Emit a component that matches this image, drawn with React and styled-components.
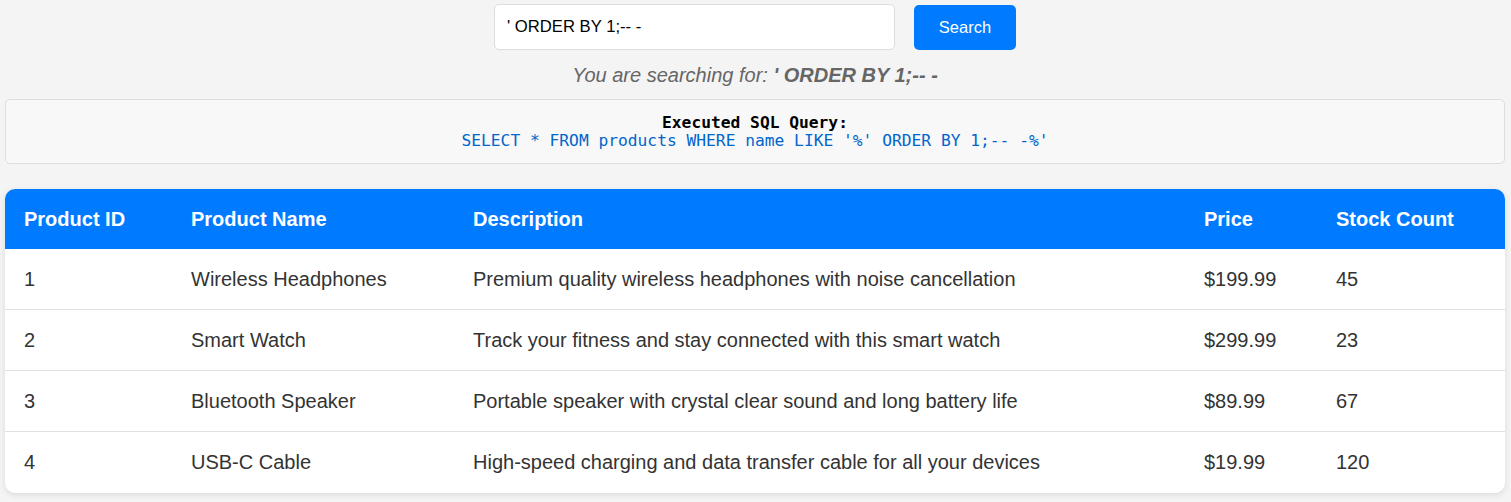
import React from "react";
import styled, { createGlobalStyle } from "styled-components";

const GlobalStyle = createGlobalStyle`
  html, body {
    margin: 0;
    padding: 0;
    background: #f4f4f4;
    font-family: "Liberation Sans", Arial, sans-serif;
  }
`;

const Page = styled.div`
  padding: 4px 6px 8px 5px;
`;

const Form = styled.form`
  display: flex;
  justify-content: center;
  align-items: flex-start;
  gap: 19px;
  margin: 0;
`;

const Input = styled.input`
  box-sizing: border-box;
  width: 401px;
  height: 46px;
  padding: 0 12px;
  border: 1px solid #dddddd;
  border-radius: 5px;
  background: #ffffff;
  color: #000000;
  font-family: "Liberation Sans", Arial, sans-serif;
  font-size: 16.67px;
  outline: none;
`;

const Button = styled.button`
  box-sizing: border-box;
  width: 102px;
  height: 45px;
  margin-top: 1px;
  border: none;
  border-radius: 5px;
  background: #007bff;
  color: #ffffff;
  font-family: "Liberation Sans", Arial, sans-serif;
  font-size: 16.5px;
  cursor: pointer;
`;

const Info = styled.p`
  margin: 13px 0 0;
  text-align: center;
  font-size: 20px;
  line-height: 24px;
  font-style: italic;
  color: #666666;
`;

const QueryBox = styled.div`
  margin-top: 12px;
  box-sizing: border-box;
  width: 1500px;
  padding: 14px 0 13px;
  background: #f8f8f8;
  border: 1px solid #dddddd;
  border-radius: 5px;
  text-align: center;
  font-family: "DejaVu Sans Mono", monospace;
  font-size: 16.25px;
  line-height: 18px;
`;

const QueryLabel = styled.div`
  font-weight: bold;
  color: #000000;
`;

const QueryCode = styled.code`
  display: block;
  font-family: inherit;
  color: #0066cc;
`;

const TableWrap = styled.div`
  margin-top: 25px;
  width: 1500px;
  border-radius: 10px;
  overflow: hidden;
  background: #ffffff;
  box-shadow: 0 2px 6px rgba(0, 0, 0, 0.1);
`;

const Table = styled.table`
  width: 100%;
  border-collapse: collapse;
  table-layout: fixed;
`;

const Th = styled.th`
  background: #007bff;
  color: #ffffff;
  text-align: left;
  font-weight: bold;
  font-size: 20px;
  line-height: 24px;
  padding: 18px 19px;
`;

const Row = styled.tr`
  &:last-child td {
    border-bottom-color: #ffffff;
  }
`;

const Td = styled.td`
  color: #333333;
  font-size: 20px;
  line-height: 24px;
  padding: 18px 19px;
  border-bottom: 1px solid #e0e0e0;
  white-space: nowrap;
`;

const columns = [
  { label: "Product ID", width: 167 },
  { label: "Product Name", width: 282 },
  { label: "Description", width: 731 },
  { label: "Price", width: 132 },
  { label: "Stock Count", width: 188 },
];

const products = [
  [1, "Wireless Headphones", "Premium quality wireless headphones with noise cancellation", "$199.99", 45],
  [2, "Smart Watch", "Track your fitness and stay connected with this smart watch", "$299.99", 23],
  [3, "Bluetooth Speaker", "Portable speaker with crystal clear sound and long battery life", "$89.99", 67],
  [4, "USB-C Cable", "High-speed charging and data transfer cable for all your devices", "$19.99", 120],
];

export default function App() {
  const term = "' ORDER BY 1;-- -";
  return (
    <>
      <GlobalStyle />
      <Page>
        <Form onSubmit={(e) => e.preventDefault()}>
          <Input type="text" defaultValue={term} />
          <Button type="submit">Search</Button>
        </Form>
        <Info>
          You are searching for: <strong>{term}</strong>
        </Info>
        <QueryBox>
          <QueryLabel>Executed SQL Query:</QueryLabel>
          <QueryCode>SELECT * FROM products WHERE name LIKE '%{term}%'</QueryCode>
        </QueryBox>
        <TableWrap>
          <Table>
            <colgroup>
              {columns.map((c) => (
                <col key={c.label} style={{ width: c.width }} />
              ))}
            </colgroup>
            <thead>
              <tr>
                {columns.map((c) => (
                  <Th key={c.label}>{c.label}</Th>
                ))}
              </tr>
            </thead>
            <tbody>
              {products.map((p) => (
                <Row key={p[0]}>
                  {p.map((v, i) => (
                    <Td key={i}>{v}</Td>
                  ))}
                </Row>
              ))}
            </tbody>
          </Table>
        </TableWrap>
      </Page>
    </>
  );
}
